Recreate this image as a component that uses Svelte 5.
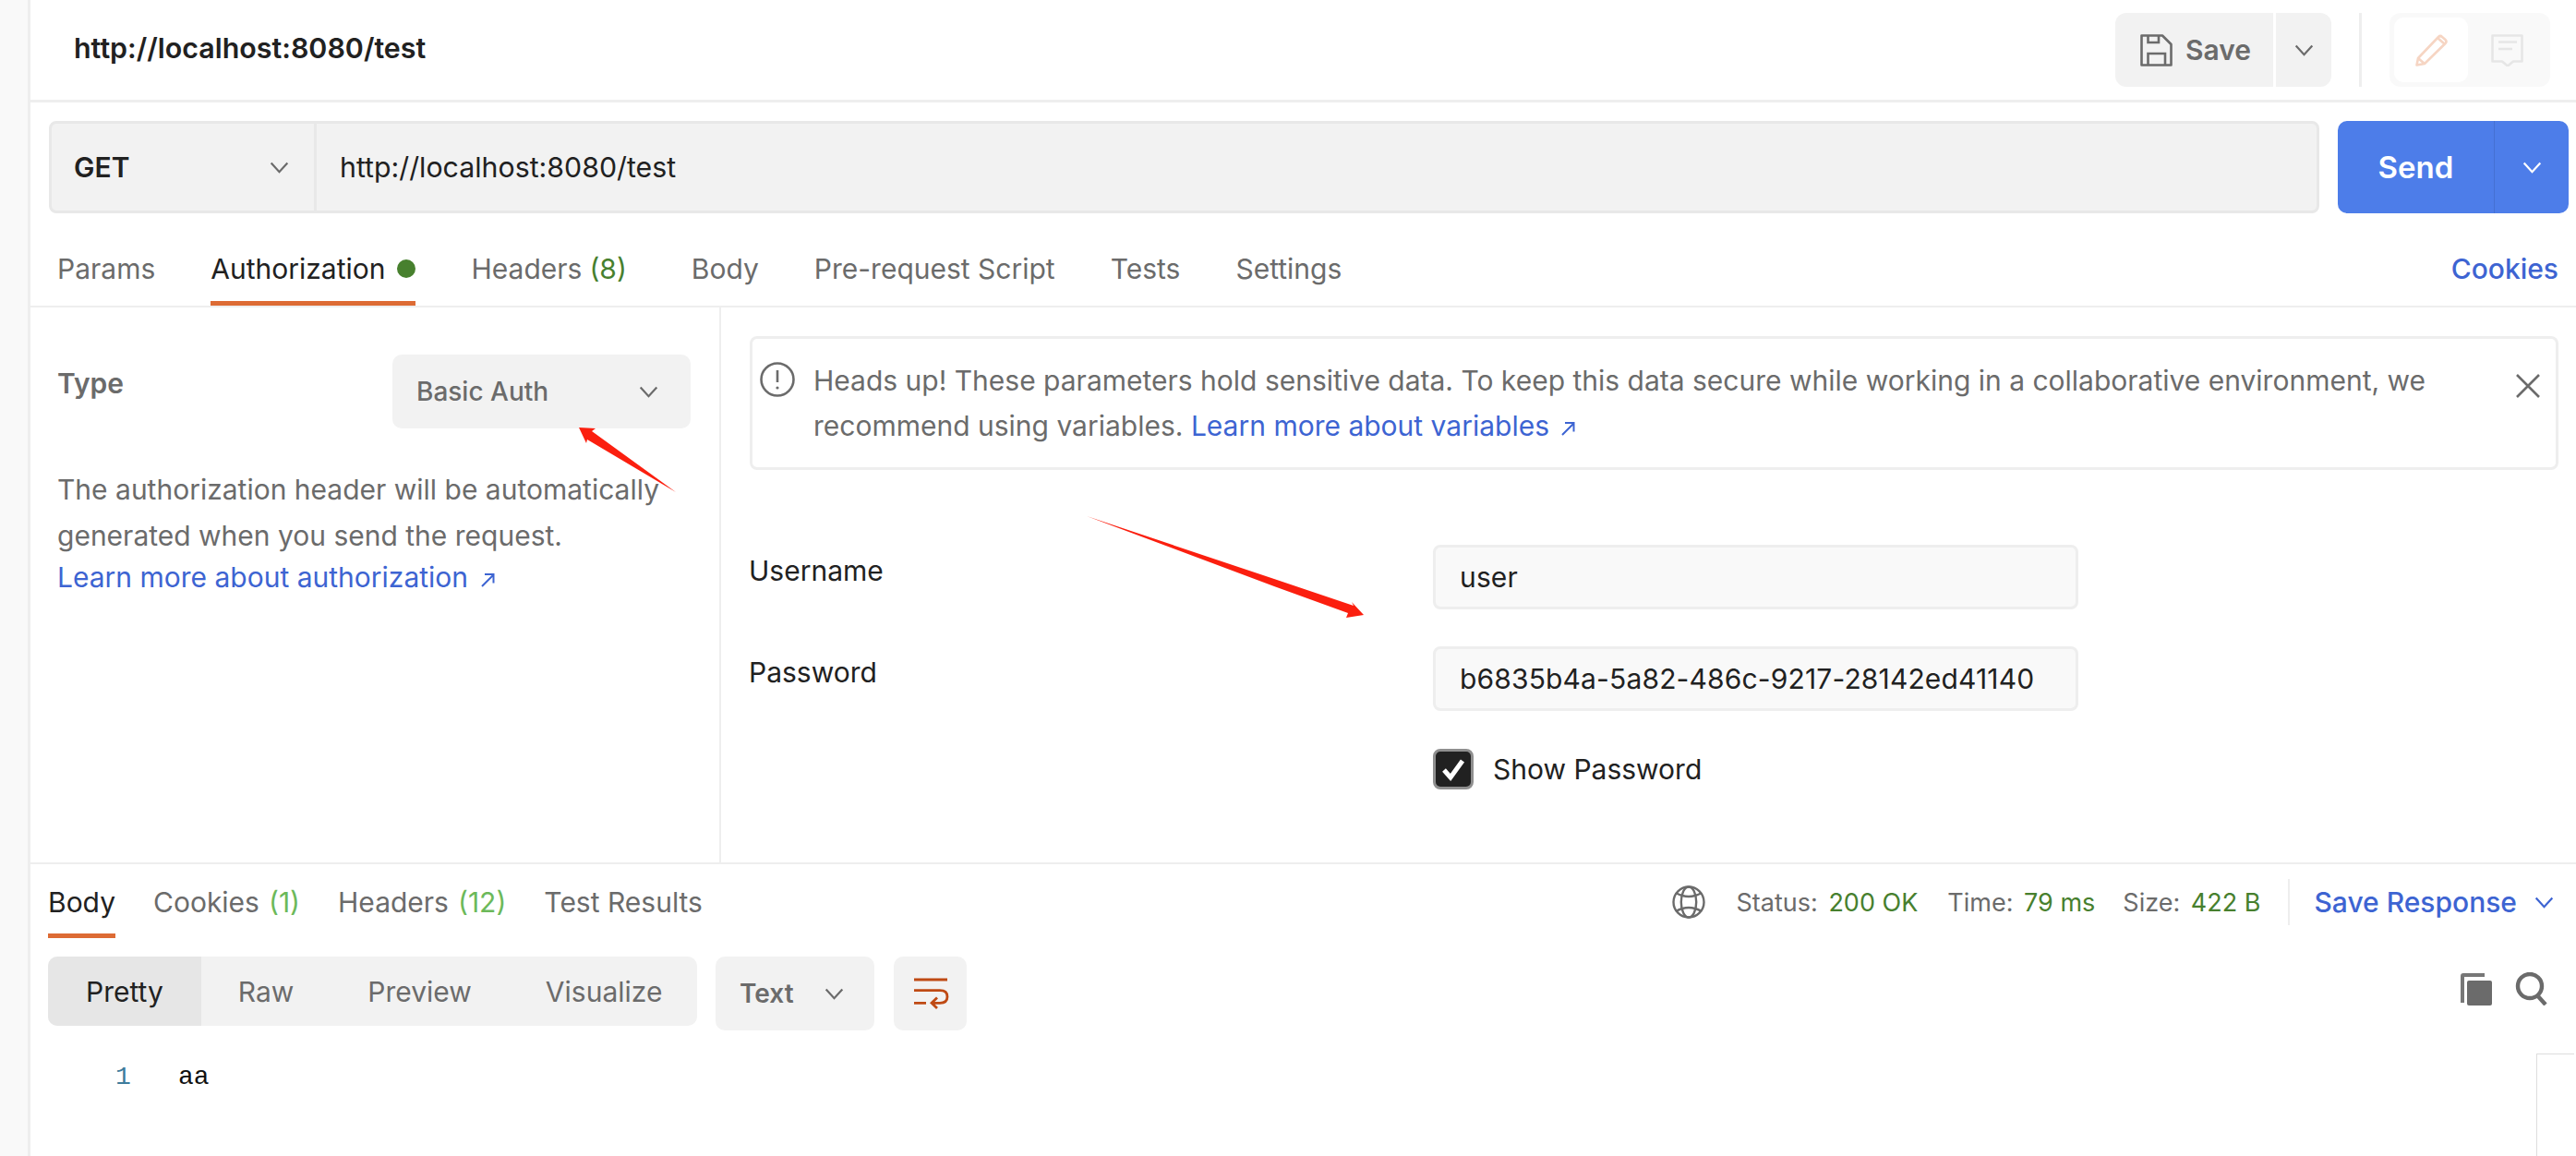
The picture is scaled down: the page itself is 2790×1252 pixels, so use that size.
<script lang="ts">
  const requestTabs = [
    { label: "Params" },
    { label: "Authorization", active: true, dot: true },
    { label: "Headers", count: "(8)", wide: true },
    { label: "Body" },
    { label: "Pre-request Script" },
    { label: "Tests" },
    { label: "Settings" },
  ];
  const responseTabs = [
    { label: "Body", active: true },
    { label: "Cookies", count: "(1)" },
    { label: "Headers", count: "(12)" },
    { label: "Test Results" },
  ];
  const views = ["Pretty", "Raw", "Preview", "Visualize"];
  const stats = [
    { label: "Status:", value: "200 OK" },
    { label: "Time:", value: "79 ms" },
    { label: "Size:", value: "422 B" },
  ];
</script>

{#snippet chevron()}
  <svg class="chevron" viewBox="0 0 22 14" fill="none" stroke="currentColor" stroke-width="2.4">
    <path d="M1.5 1.5 11 12 20.5 1.5" />
  </svg>
{/snippet}

{#snippet external()}
  <svg class="external" viewBox="0 0 16 16" fill="none" stroke="currentColor" stroke-width="2">
    <path d="M2 15 14 3M5 2h9.5v9.5" />
  </svg>
{/snippet}

<div class="app">
  <aside class="gutter"></aside>
  <main class="main">
    <header class="title-bar">
      <h1 class="title">http://localhost:8080/test</h1>
      <div class="title-actions">
        <button class="save">
          <svg class="save-icon" viewBox="0 0 35 35" fill="none" stroke="currentColor" stroke-width="2.6">
            <path d="M1.5 1.5H24L33.5 11V33.5H1.5z" stroke-linejoin="round" />
            <path d="M8.5 33V21H27V33M8.5 2V9H20V2" />
          </svg>
          Save
        </button>
        <button class="save-more">{@render chevron()}</button>
        <span class="vsep"></span>
        <div class="mode">
          <span class="mode-on">
            <svg class="mode-icon" viewBox="0 0 35 35" fill="none" stroke="#f6d5c3" stroke-width="2.6">
              <path d="M1.5 33.5 3 26 25 3Q27 1 29 3L32.5 6Q34.5 8 32.5 10L10 32zM3 26l7 6M24 4l8 7" stroke-linejoin="round" />
            </svg>
          </span>
          <span class="mode-off">
            <svg class="mode-icon" viewBox="0 0 35 35" fill="none" stroke="#e6e6e6" stroke-width="2.6">
              <path d="M1.5 1.5H33.5V29.5H24L18 34.5 12 29.5H1.5z" stroke-linejoin="round" />
              <path d="M8 8.5H28M8 16H23" />
            </svg>
          </span>
        </div>
      </div>
    </header>

    <section class="request-row">
      <div class="url-bar">
        <div class="method">GET {@render chevron()}</div>
        <div class="url">http://localhost:8080/test</div>
      </div>
      <div class="send">
        <span class="send-label">Send</span>
        <span class="send-more">{@render chevron()}</span>
      </div>
    </section>

    <nav class="tabs">
      {#each requestTabs as tab}
        <span class="tab" class:active={tab.active} class:wide={tab.wide}>
          {tab.label}
          {#if tab.count}<span class="count">{tab.count}</span>{/if}
          {#if tab.dot}<span class="dot"></span>{/if}
        </span>
      {/each}
      <span class="cookies">Cookies</span>
    </nav>

    <section class="config">
      <div class="auth-side">
        <div class="type-row">
          <span class="type-label">Type</span>
          <div class="type-select">Basic Auth {@render chevron()}</div>
        </div>
        <p class="hint">The authorization header will be automatically generated when you send the request.</p>
        <a class="link side-link" href="#auth">Learn more about authorization {@render external()}</a>
      </div>
      <div class="auth-form">
        <div class="alert">
          <svg class="alert-icon" viewBox="0 0 38 38" fill="none" stroke="#6b6b6b" stroke-width="2.6">
            <circle cx="19" cy="19" r="17.5" />
            <path d="M19 9v13" />
            <circle cx="19" cy="28" r="1.6" fill="#6b6b6b" stroke="none" />
          </svg>
          <p class="alert-text">
            Heads up! These parameters hold sensitive data. To keep this data secure while working in a collaborative environment, we recommend using variables.
            <a class="link" href="#vars">Learn more about variables {@render external()}</a>
          </p>
          <svg class="close" viewBox="0 0 26 26" fill="none" stroke="#6b6b6b" stroke-width="2.6">
            <path d="M1 1l24 24M25 1 1 25" />
          </svg>
        </div>
        <div class="field first">
          <label class="field-label" for="user">Username</label>
          <div class="input" id="user">user</div>
        </div>
        <div class="field">
          <label class="field-label" for="pass">Password</label>
          <div class="input" id="pass">b6835b4a-5a82-486c-9217-28142ed41140</div>
        </div>
        <div class="show-row">
          <span class="checkbox">
            <svg viewBox="0 0 30 30" fill="none" stroke="#fff" stroke-width="5">
              <path d="M5 16l7 8L25 6" />
            </svg>
          </span>
          Show Password
        </div>
      </div>
    </section>

    <section class="response">
      <div class="resp-head">
        <div class="resp-tabs">
          {#each responseTabs as tab}
            <span class="resp-tab" class:active={tab.active}>
              {tab.label}
              {#if tab.count}<span class="count light">{tab.count}</span>{/if}
            </span>
          {/each}
        </div>
        <div class="resp-meta">
          <svg class="globe" viewBox="0 0 36 36" fill="none" stroke="#6b6b6b" stroke-width="2.4">
            <circle cx="18" cy="18" r="16.5" />
            <ellipse cx="18" cy="18" rx="8.2" ry="16.5" />
            <path d="M4 8Q18 16 32 8M4 28Q18 20 32 28" />
          </svg>
          {#each stats as s}
            <span class="stat">{s.label} <b>{s.value}</b></span>
          {/each}
          <span class="meta-sep"></span>
          <span class="save-resp">Save Response {@render chevron()}</span>
        </div>
      </div>
      <div class="resp-toolbar">
        <div class="segments">
          {#each views as v, i}
            <span class="segment" class:on={i === 0}>{v}</span>
          {/each}
        </div>
        <div class="format">Text {@render chevron()}</div>
        <div class="wrap">
          <svg viewBox="0 0 36 36" fill="none" stroke="#bf4a14" stroke-width="2.8">
            <path d="M0 3H36M0 14.7H28Q36 14.7 36 21.5 36 28.3 28 28.3H19M0 28.3H13M25 22.5l-6 5.8 6 5.7" />
          </svg>
        </div>
        <div class="resp-icons">
          <svg class="copy" viewBox="0 0 36 36">
            <path d="M2 4q0-3 3-3h23v4H6v28H2z" fill="#777" />
            <rect x="9" y="9" width="27" height="27" rx="2" fill="#6b6b6b" />
          </svg>
          <svg class="search" viewBox="0 0 36 36" fill="none" stroke="#6b6b6b" stroke-width="4.4">
            <circle cx="16" cy="15" r="13" />
            <path d="M24 25l9 10" />
          </svg>
        </div>
      </div>
      <div class="code">
        <span class="line-no">1</span>
        <span class="line">aa</span>
        <div class="minimap"></div>
      </div>
    </section>
  </main>

  <svg class="annotations" viewBox="0 0 2790 1252">
    <polygon points="627,463 645,464 641,467 732,533 636,476 635,480" fill="#fb1f0f" />
    <polygon points="1177,559 1380,627 1466,656 1464,652 1477,666 1458,669 1460,664 1380,635" fill="#fb1f0f" />
  </svg>
</div>

<style>
  :global(body) {
    margin: 0;
    background: #fff;
  }

  .app {
    position: relative;
    display: flex;
    width: 2790px;
    height: 1252px;
    overflow: hidden;
    background: #fff;
    color: #6b6b6b;
    font-family: Inter, "Noto Sans", sans-serif;
    font-size: 30px;
  }

  .gutter {
    flex: none;
    width: 30px;
    background: #f9f9f9;
    border-right: 3px solid #eeeeee;
  }

  .main {
    flex: 1;
    display: flex;
    flex-direction: column;
    min-width: 0;
  }

  .chevron {
    width: 21px;
    height: 13px;
    flex: none;
  }

  .external {
    width: 16px;
    height: 16px;
    margin-left: 4px;
  }

  button {
    font: inherit;
    color: inherit;
    border: 0;
    padding: 0;
    background: #f2f2f2;
  }

  .title-bar {
    flex: none;
    display: flex;
    align-items: center;
    justify-content: space-between;
    height: 108px;
    padding: 0 28px 0 47px;
    border-bottom: 3px solid #eeeeee;
  }

  .title {
    margin: 0 0 5px;
    font-size: 30.4px;
    font-weight: 600;
    color: #212121;
  }

  .title-actions {
    display: flex;
    align-items: stretch;
    height: 80px;
  }

  .save {
    display: flex;
    align-items: center;
    gap: 14px;
    width: 171px;
    padding-left: 27px;
    border-radius: 12px 0 0 12px;
    font-weight: 600;
  }

  .save-icon {
    width: 35px;
    height: 35px;
  }

  .save-more {
    display: flex;
    align-items: center;
    justify-content: center;
    width: 60px;
    margin-left: 3px;
    border-radius: 0 12px 12px 0;
  }

  .vsep {
    width: 3px;
    margin: 0 30px;
    background: #eeeeee;
  }

  .mode {
    display: flex;
    width: 174px;
    padding: 5px;
    box-sizing: border-box;
    background: #f9f9f9;
    border-radius: 12px;
  }

  .mode-on,
  .mode-off {
    flex: 1;
    display: flex;
    align-items: center;
    justify-content: center;
    border-radius: 10px;
  }

  .mode-on {
    flex: none;
    width: 80px;
    background: #fff;
  }

  .mode-icon {
    width: 35px;
    height: 35px;
  }

  .request-row {
    flex: none;
    display: flex;
    gap: 20px;
    height: 100px;
    margin-top: 20px;
    padding: 0 8px 0 20px;
  }

  .url-bar {
    flex: 1;
    display: flex;
    box-sizing: border-box;
    border: 3px solid #e8e8e8;
    border-radius: 8px;
    background: #f2f2f2;
  }

  .method {
    display: flex;
    align-items: center;
    justify-content: space-between;
    box-sizing: border-box;
    width: 287px;
    padding: 0 27px 0 24px;
    border-right: 3px solid #e8e8e8;
    color: #212121;
    font-weight: 600;
  }

  .method .chevron {
    color: #6b6b6b;
  }

  .url {
    display: flex;
    align-items: center;
    padding-left: 25px;
    color: #212121;
    font-size: 30.3px;
  }

  .send {
    flex: none;
    display: flex;
    width: 250px;
    border-radius: 10px;
    background: #4d7de9;
    color: #fff;
  }

  .send-label {
    display: flex;
    align-items: center;
    justify-content: center;
    width: 169px;
    border-right: 1px solid #4570d2;
    font-size: 33px;
    font-weight: 600;
  }

  .send-more {
    flex: 1;
    display: flex;
    align-items: center;
    justify-content: center;
  }

  .tabs {
    flex: none;
    display: flex;
    align-items: stretch;
    gap: 60px;
    height: 102px;
    box-sizing: border-box;
    padding: 0 18px 0 29px;
    border-bottom: 2px solid #eeeeee;
  }

  .tab {
    display: flex;
    align-items: center;
    gap: 8px;
    padding-top: 25px;
    box-sizing: border-box;
    border-bottom: 5px solid transparent;
  }

  .tab.active {
    gap: 13px;
    color: #212121;
    border-bottom-color: #dd6b34;
  }

  .tab.wide {
    margin-right: 10px;
  }

  .count {
    color: #47802e;
  }

  .count.light {
    color: #6cb95a;
  }

  .dot {
    width: 20px;
    height: 20px;
    border-radius: 50%;
    background: #47802e;
  }

  .cookies {
    margin-left: auto;
    align-self: center;
    padding-top: 20px;
    margin-right: 1px;
    color: #3d64d2;
    font-weight: 500;
  }

  .config {
    flex: none;
    display: flex;
    height: 601px;
    border-bottom: 2px solid #eeeeee;
  }

  .auth-side {
    flex: none;
    box-sizing: border-box;
    width: 748px;
    padding: 51px 31px 0 29px;
    border-right: 2px solid #eeeeee;
  }

  .type-row {
    display: flex;
    justify-content: space-between;
    align-items: flex-start;
  }

  .type-label {
    margin-top: 13px;
    font-weight: 600;
  }

  .type-select {
    display: flex;
    align-items: center;
    justify-content: space-between;
    box-sizing: border-box;
    width: 323px;
    height: 80px;
    padding: 0 35px 0 26px;
    border-radius: 10px;
    background: #f2f2f2;
    font-size: 28px;
    font-weight: 500;
  }

  .hint {
    margin: 41px 0 0;
    line-height: 50px;
  }

  .link {
    color: #3d64d2;
    text-decoration: none;
  }

  .side-link {
    display: block;
    line-height: 40px;
  }

  .auth-form {
    flex: 1;
    padding: 31px 19px 0 31px;
  }

  .alert {
    position: relative;
    display: flex;
    box-sizing: border-box;
    height: 145px;
    padding: 21px 60px 0 8px;
    border: 3px solid #eeeeee;
    border-radius: 8px;
  }

  .alert-icon {
    flex: none;
    width: 38px;
    height: 38px;
    margin: 4px 20px 0 0;
  }

  .alert-text {
    margin: 0;
    line-height: 49px;
  }

  .close {
    position: absolute;
    top: 38px;
    right: 17px;
    width: 26px;
    height: 26px;
  }

  .field {
    display: flex;
    align-items: flex-start;
    margin-top: 40px;
  }

  .field.first {
    margin-top: 81px;
  }

  .field-label {
    width: 740px;
    margin: 10px 0 0 -1px;
    padding-right: 1px;
    color: #212121;
  }

  .input {
    display: flex;
    align-items: center;
    box-sizing: border-box;
    width: 699px;
    height: 70px;
    padding-left: 26px;
    border: 3px solid #eeeeee;
    border-radius: 8px;
    background: #f9f9f9;
    color: #212121;
    letter-spacing: 0.15px;
  }

  .show-row {
    display: flex;
    align-items: center;
    gap: 21px;
    margin: 41px 0 0 740px;
    color: #212121;
  }

  .checkbox {
    display: flex;
    align-items: center;
    justify-content: center;
    box-sizing: border-box;
    width: 44px;
    height: 44px;
    border: 3px solid #8f8f8f;
    border-radius: 8px;
    background: #212121;
  }

  .checkbox svg {
    width: 30px;
    height: 30px;
  }

  .response {
    flex: 1;
    display: flex;
    flex-direction: column;
    min-height: 0;
  }

  .resp-head {
    flex: none;
    display: flex;
    justify-content: space-between;
    height: 80px;
    padding: 0 24px 0 19px;
  }

  .resp-tabs {
    display: flex;
    gap: 41px;
  }

  .resp-tab {
    display: flex;
    align-items: center;
    gap: 10px;
    box-sizing: border-box;
    padding-top: 7px;
    border-bottom: 5px solid transparent;
  }

  .resp-tab.active {
    color: #212121;
    border-bottom-color: #dd6b34;
  }

  .resp-meta {
    display: flex;
    align-items: center;
    padding-top: 2px;
    font-size: 27px;
  }

  .globe {
    width: 36px;
    height: 36px;
    margin-right: 34px;
  }

  .stat {
    margin-right: 30px;
  }

  .stat:first-of-type {
    margin-right: 32px;
  }

  .stat b {
    margin-left: 4px;
    color: #47802e;
    font-weight: 400;
  }

  .meta-sep {
    width: 2px;
    height: 50px;
    margin-right: 26px;
    background: #eeeeee;
  }

  .save-resp {
    display: flex;
    align-items: center;
    gap: 19px;
    color: #3d64d2;
    font-size: 30px;
    font-weight: 500;
  }

  .resp-toolbar {
    flex: none;
    display: flex;
    align-items: flex-start;
    height: 80px;
    margin-top: 20px;
    padding: 0 30px 0 19px;
  }

  .segments {
    display: flex;
    width: 703px;
    height: 75px;
    border-radius: 10px;
    overflow: hidden;
    background: #f2f2f2;
  }

  .segment {
    display: flex;
    align-items: center;
    justify-content: center;
    padding: 0 40px;
  }

  .segment.on {
    padding: 0 41px;
    background: #e6e6e6;
    color: #212121;
  }

  .format {
    display: flex;
    align-items: center;
    justify-content: space-between;
    box-sizing: border-box;
    width: 172px;
    height: 80px;
    margin-left: 20px;
    padding: 0 33px 0 26px;
    border-radius: 10px;
    background: #f2f2f2;
    font-size: 28px;
    font-weight: 600;
  }

  .wrap {
    display: flex;
    align-items: center;
    justify-content: center;
    width: 79px;
    height: 80px;
    margin-left: 21px;
    border-radius: 10px;
    background: #f2f2f2;
  }

  .wrap svg {
    width: 36px;
    height: 36px;
    overflow: visible;
  }

  .resp-icons {
    display: flex;
    gap: 25px;
    margin: 17px 0 0 auto;
  }

  .copy,
  .search {
    width: 36px;
    height: 36px;
  }

  .code {
    position: relative;
    flex: 1;
    display: flex;
    padding: 35px 0 0 92px;
    font-family: "Liberation Mono", monospace;
    font-size: 28px;
    color: #111;
  }

  .line-no {
    width: 68px;
    color: #3e7c9c;
  }

  .minimap {
    position: absolute;
    top: 25px;
    left: 2714px;
    width: 40px;
    bottom: 0;
    border: solid #dddddd;
    border-width: 1px 0 0 1px;
  }

  .annotations {
    position: absolute;
    inset: 0;
    width: 2790px;
    height: 1252px;
    pointer-events: none;
  }
</style>
